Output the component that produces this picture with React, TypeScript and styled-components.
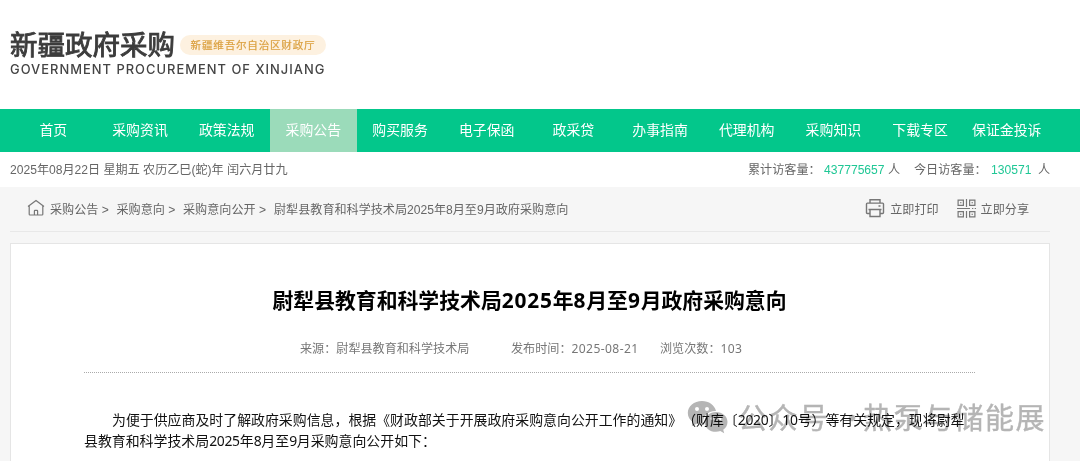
import React from "react";
import styled, { createGlobalStyle, css } from "styled-components";

const Global = createGlobalStyle`
  * { box-sizing: border-box; }
  html, body { margin: 0; padding: 0; }
  body {
    font-family: "Noto Sans CJK SC", sans-serif;
    font-size: 12.1px;
    color: #666;
    background: #fff;
    overflow: hidden;
    text-spacing-trim: space-all;
  }
`;

const Page = styled.div`
  position: relative;
  width: 1080px;
  height: 461px;
  overflow: hidden;
  display: flex;
  flex-direction: column;
  white-space: nowrap;
  background: #fff;
`;

const Header = styled.header`
  height: 109px;
  flex: none;
  padding: 25px 0 0 10px;
`;

const BrandRow = styled.div`
  display: flex;
  align-items: center;
  height: 36px;
`;

const Brand = styled.h1`
  margin: 0;
  width: 170px;
  font-size: 27.5px;
  line-height: 36px;
  font-weight: 400;
  -webkit-text-stroke: 0.9px #3c3c3c;
  color: #3c3c3c;
`;

const Department = styled.span`
  display: flex;
  align-items: center;
  justify-content: center;
  width: 146px;
  height: 20px;
  margin-top: 3px;
  padding-bottom: 1px;
  border-radius: 10px;
  background: #fdf1e0;
  color: #dba03f;
  font-size: 10.6px;
  -webkit-text-stroke: 0.2px #dba03f;
  letter-spacing: 0.75px;
`;

const BrandEnglish = styled.div`
  margin-top: 1px;
  font-family: Inter, sans-serif;
  font-size: 12.9px;
  line-height: 15px;
  font-weight: 500;
  letter-spacing: 1.02px;
  color: #444;
`;

const Nav = styled.nav`
  flex: none;
  display: flex;
  height: 43px;
  padding: 0 30px 0 10px;
  background: #03c78b;
`;

const NavItem = styled.a<{ $active?: boolean }>`
  flex: 1 0 0;
  text-align: center;
  color: #fff;
  font-size: 13.9px;
  line-height: 41px;
  ${(p) => p.$active && css`background: #9bdbba;`}
`;

const InfoBar = styled.div`
  flex: none;
  display: flex;
  justify-content: space-between;
  height: 35px;
  line-height: 36px;
  padding: 0 30px 0 10px;
  font-family: "Liberation Sans", "Noto Sans CJK SC", sans-serif;
`;

const Visitors = styled.div`
  display: flex;
`;

const VisitorLabel = styled.span<{ $w: number }>`
  width: ${(p) => p.$w}px;
`;

const Count = styled.span<{ $w: number }>`
  width: ${(p) => p.$w}px;
  color: #1fc795;
`;

const Main = styled.main`
  flex: 1;
  display: flex;
  flex-direction: column;
  padding: 0 30px 0 10px;
  background: #f6f6f6;
`;

const Toolbar = styled.div`
  flex: none;
  display: flex;
  align-items: center;
  height: 45px;
  padding: 0 21px 2px 17px;
  border-bottom: 1px solid #e8e8e8;
`;

const Crumb = styled.span<{ $w?: number }>`
  ${(p) => p.$w && css`width: ${p.$w}px;`}
  font-family: "Liberation Sans", "Noto Sans CJK SC", sans-serif;
`;

const Icon = styled.svg<{ $gap: number }>`
  flex: none;
  margin-right: ${(p) => p.$gap}px;
  fill: none;
  stroke: #777;
`;

const Actions = styled.div`
  display: flex;
  align-items: center;
  gap: 18px;
  margin-left: auto;
`;

const Action = styled.a`
  display: flex;
  align-items: center;
`;

const Article = styled.article`
  flex: 1;
  margin-top: 11px;
  padding: 0 74px 0 73px;
  border: 1px solid #e5e5e5;
  border-bottom: 0;
  background: #fff;
`;

const Title = styled.h2`
  margin: 40px 0 0;
  text-align: center;
  font-size: 20.85px;
  line-height: 30px;
  font-weight: 700;
  color: #000;
`;

const Digits = styled.span<{ $ls: number }>`
  font-family: "Noto Sans", sans-serif;
  letter-spacing: ${(p) => p.$ls}px;
`;

const Meta = styled.div`
  display: flex;
  height: 58px;
  padding: 19px 0 0 216px;
  line-height: 28px;
  color: #777;
  border-bottom: 1px dotted #aaa;
`;

const MetaItem = styled.span<{ $w?: number }>`
  ${(p) => p.$w && css`width: ${p.$w}px;`}
`;

const Body = styled.p`
  margin: 36px 0 0;
  font-size: 13.92px;
  line-height: 21px;
  color: #111;
`;

const Line = styled.span<{ $indent?: boolean }>`
  display: block;
  padding-left: ${(p) => (p.$indent ? 28 : 0)}px;
`;

const Watermark = styled.div`
  position: absolute;
  left: 687px;
  top: 394px;
  display: flex;
  align-items: center;
  height: 44px;
  color: #b5b5b5;
  mix-blend-mode: multiply;
  font-size: 29px;
  letter-spacing: 1.5px;
  -webkit-text-stroke: 0.4px #b5b5b5;
`;

const WatermarkLogo = styled.span`
  display: flex;
  width: 51px;
  padding-top: 2px;
`;

const WatermarkText = styled.span<{ $w?: number }>`
  ${(p) => p.$w && css`width: ${p.$w}px;`}
`;

const NAV = ["首页", "采购资讯", "政策法规", "采购公告", "购买服务", "电子保函", "政采贷", "办事指南", "代理机构", "采购知识", "下载专区", "保证金投诉"];

const HomeIcon = () => (
  <Icon $gap={5} width="18" height="18" viewBox="0 0 18 18" strokeWidth="1.2">
    <path d="M1 7.6 9 1.6 17 7.6M2.2 7v8.2q0 .8.8.8h12q.8 0 .8-.8V7M7.4 16v-4q0-.6.6-.6h2q.6 0 .6.6v4" />
  </Icon>
);

const PrintIcon = () => (
  <Icon $gap={5} width="20" height="20" viewBox="0 0 20 20" strokeWidth="1.4">
    <path d="M5 5V1.7h10V5M5 15.5H2.4q-.9 0-.9-.9V6q0-.9.9-.9h15.2q.9 0 .9.9v8.6q0 .9-.9.9H15M5 11.5h10v7H5zM3.5 11.5h13M13.5 8h2" />
  </Icon>
);

const QrIcon = () => (
  <Icon $gap={5} width="19" height="19" viewBox="0 0 19 19" strokeWidth="1.2">
    <path d="M1.1 1.1h5.3v5.3H1.1zM12.6 1.1h5.3v5.3h-5.3zM1.1 12.6h5.3v5.3H1.1zM12.6 12.6h5.3v5.3h-5.3zM3 3.75h1.5M14.5 3.75H16M3 15.25h1.5M14.5 15.25H16M9.5 0v8M0 9.5h13M15 9.5h1.3M17.7 9.5H19M9.5 12v7" />
  </Icon>
);

const WechatIcon = () => (
  <svg width="41" height="35" viewBox="0 0 41 35">
    <path
      fill="currentColor"
      fillRule="evenodd"
      d="M15 1C7 1 .8 6.300.8 13c0 3.800 2 7 5.200 9.200L4.700 26.200l4.800-2.400c1.800.6 3.600.9 5.700.9h1.200C14.500 17 20.500 10.800 29 10.900 27.600 5.100 21.800 1 15 1ZM10 7a2 2 0 1 0 0 4 2 2 0 0 0 0-4Zm10 0a2 2 0 1 0 0 4 2 2 0 0 0 0-4Z"
    />
    <path
      fill="currentColor"
      fillRule="evenodd"
      d="M29 12c-6.400 0-11.500 4.400-11.500 9.900S22.600 31.800 29 31.800c1.500 0 3-.3 4.300-.7l3.900 2.200-1-3.500c2.700-1.900 4.300-4.700 4.300-7.900C40.500 16.400 35.400 12 29 12Zm-3.900 5a1.600 1.600 0 1 0 0 3.200 1.600 1.600 0 0 0 0-3.200Zm7.800 0a1.600 1.600 0 1 0 0 3.200 1.600 1.600 0 0 0 0-3.200Z"
    />
  </svg>
);

export default function App() {
  return (
    <Page>
      <Global />
      <Header>
        <BrandRow>
          <Brand>新疆政府采购</Brand>
          <Department>新疆维吾尔自治区财政厅</Department>
        </BrandRow>
        <BrandEnglish>GOVERNMENT PROCUREMENT OF XINJIANG</BrandEnglish>
      </Header>
      <Nav>
        {NAV.map((label) => (
          <NavItem key={label} $active={label === "采购公告"}>{label}</NavItem>
        ))}
      </Nav>
      <InfoBar>
        <span>2025年08月22日 星期五 农历乙巳(蛇)年 闰六月廿九</span>
        <Visitors>
          <VisitorLabel $w={76}>累计访客量：</VisitorLabel>
          <Count $w={64}>437775657</Count>
          <VisitorLabel $w={26}>人</VisitorLabel>
          <VisitorLabel $w={77}>今日访客量：</VisitorLabel>
          <Count $w={47}>130571</Count>
          <VisitorLabel $w={12}>人</VisitorLabel>
        </Visitors>
      </InfoBar>
      <Main>
        <Toolbar>
          <HomeIcon />
          <Crumb $w={66.5}>采购公告 &gt;</Crumb>
          <Crumb $w={66.5}>采购意向 &gt;</Crumb>
          <Crumb $w={91}>采购意向公开 &gt;</Crumb>
          <Crumb>尉犁县教育和科学技术局2025年8月至9月政府采购意向</Crumb>
          <Actions>
            <Action><PrintIcon />立即打印</Action>
            <Action><QrIcon />立即分享</Action>
          </Actions>
        </Toolbar>
        <Article>
          <Title>
            尉犁县教育和科学技术局<Digits $ls={0.8}>2025</Digits>年<Digits $ls={0.8}>8</Digits>月至<Digits $ls={0.8}>9</Digits>月政府采购意向
          </Title>
          <Meta>
            <MetaItem $w={211}>来源：尉犁县教育和科学技术局</MetaItem>
            <MetaItem $w={149}>发布时间：<Digits $ls={0.4}>2025-08-21</Digits></MetaItem>
            <MetaItem>浏览次数：<Digits $ls={0.3}>103</Digits></MetaItem>
          </Meta>
          <Body>
            <Line $indent>
              为便于供应商及时了解政府采购信息，根据《财政部关于开展政府采购意向公开工作的通知》（财库〔<Digits $ls={-0.3}>2020</Digits>〕<Digits $ls={-0.3}>10</Digits>号）等有关规定，现将尉犁
            </Line>
            <Line>
              县教育和科学技术局<Digits $ls={-0.3}>2025</Digits>年<Digits $ls={-0.3}>8</Digits>月至<Digits $ls={-0.3}>9</Digits>月采购意向公开如下：
            </Line>
          </Body>
        </Article>
      </Main>
      <Watermark>
        <WatermarkLogo><WechatIcon /></WatermarkLogo>
        <WatermarkText $w={125}>公众号 ·</WatermarkText>
        <WatermarkText>热泵与储能展</WatermarkText>
      </Watermark>
    </Page>
  );
}
